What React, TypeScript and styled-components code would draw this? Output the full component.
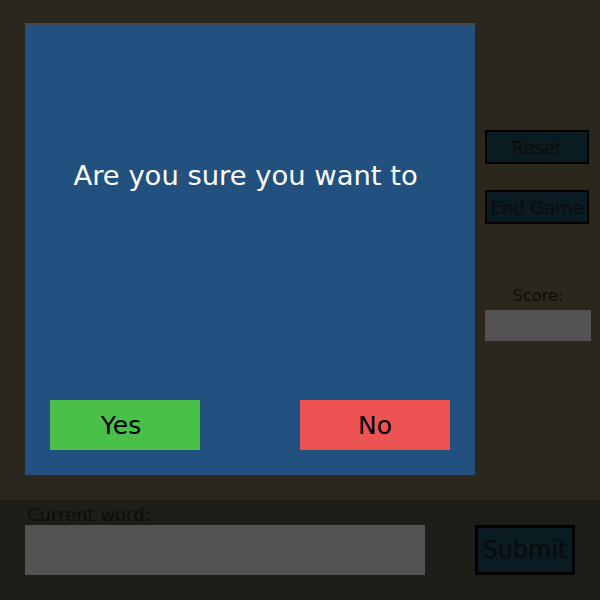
import React from "react";
import styled, { createGlobalStyle } from "styled-components";

const GlobalStyle = createGlobalStyle`
  html, body {
    margin: 0;
    padding: 0;
    background: #1e1e19;
  }
  body {
    font-family: "DejaVu Sans", Verdana, sans-serif;
  }
  * {
    box-sizing: border-box;
  }
`;

const Page = styled.div`
  width: 600px;
  height: 600px;
  display: flex;
  flex-direction: column;
  overflow: hidden;
`;

const TopArea = styled.div`
  height: 500px;
  flex: none;
  background: #2b271d;
  display: flex;
  align-items: flex-start;
  gap: 10px;
  padding: 23px 0 0 25px;
`;

const Dialog = styled.div`
  width: 450px;
  height: 452px;
  flex: none;
  background: #23517f;
  border-top: 2px solid #4b4b4b;
  display: flex;
  flex-direction: column;
  padding: 0 25px 25px;
`;

const Message = styled.p`
  margin: 135px 0 0;
  font-size: 27.4px;
  line-height: 32px;
  color: #ffffff;
  text-align: center;
  white-space: pre;
`;

const ChoiceRow = styled.div`
  margin-top: auto;
  display: flex;
  justify-content: space-between;
`;

const ChoiceButton = styled.button<{ $tone: string }>`
  width: 150px;
  height: 50px;
  border: none;
  padding: 0;
  background: ${(p) => p.$tone};
  color: #000;
  font-family: "DejaVu Sans", Verdana, sans-serif;
  font-size: 25px;
  white-space: pre;
`;

const SidePanel = styled.div`
  width: 106px;
  flex: none;
  display: flex;
  flex-direction: column;
  align-items: flex-start;
  padding-top: 107px;
`;

const ControlButton = styled.button`
  width: 104px;
  height: 34px;
  padding: 0;
  margin-bottom: 26px;
  border: 2px solid #000;
  background: #0b1b22;
  color: #0b0b0b;
  font-family: "DejaVu Sans", Verdana, sans-serif;
  font-size: 18px;
  white-space: nowrap;
`;

const ScoreLabel = styled.div`
  width: 106px;
  margin-top: 36px;
  margin-bottom: 5px;
  text-align: center;
  font-size: 16.4px;
  line-height: 19px;
  color: #0d0c0a;
`;

const ScoreBox = styled.div`
  width: 106px;
  height: 31px;
  background: #525252;
`;

const BottomBar = styled.div`
  flex: 1;
  background: #1e1e19;
  padding: 4px 25px 0;
`;

const WordLabel = styled.div`
  padding-left: 2px;
  font-size: 18px;
  line-height: 21px;
  color: #0c0c0a;
`;

const WordRow = styled.div`
  display: flex;
  gap: 50px;
`;

const WordInput = styled.input`
  width: 400px;
  height: 50px;
  border: none;
  outline: none;
  padding: 0 6px;
  background: #525252;
  font-family: "DejaVu Sans", Verdana, sans-serif;
  font-size: 18px;
`;

const SubmitButton = styled.button`
  width: 100px;
  height: 50px;
  padding: 0;
  border: 3px solid #000;
  background: #0b1b22;
  color: #0a0a0a;
  font-family: "DejaVu Sans", Verdana, sans-serif;
  font-size: 24px;
  white-space: nowrap;
`;

export default function App() {
  return (
    <>
      <GlobalStyle />
      <Page>
        <TopArea>
          <Dialog>
            <Message>{"Are you sure you want to "}</Message>
            <ChoiceRow>
              <ChoiceButton $tone="#4abf4a">{"Yes "}</ChoiceButton>
              <ChoiceButton $tone="#ec5353">No</ChoiceButton>
            </ChoiceRow>
          </Dialog>
          <SidePanel>
            <ControlButton>Reset</ControlButton>
            <ControlButton>End Game</ControlButton>
            <ScoreLabel>Score:</ScoreLabel>
            <ScoreBox />
          </SidePanel>
        </TopArea>
        <BottomBar>
          <WordLabel>Current word:</WordLabel>
          <WordRow>
            <WordInput type="text" />
            <SubmitButton>Submit</SubmitButton>
          </WordRow>
        </BottomBar>
      </Page>
    </>
  );
}
